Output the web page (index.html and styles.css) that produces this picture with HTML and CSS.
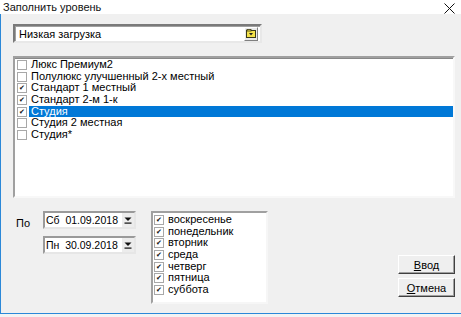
FILE: index.html
```html
<!DOCTYPE html>
<html lang="ru">
<head>
  <meta charset="UTF-8" />
  <title>Заполнить уровень</title>
  <link rel="stylesheet" href="styles.css">
</head>
<body>
  <div class="window">
    <div class="titlebar">
      <span class="title">Заполнить уровень</span>
      <svg class="close" width="11" height="11" viewBox="0 0 11 11">
        <path d="M0.5 0.5 L10.5 10.5 M10.5 0.5 L0.5 10.5" stroke="#111" stroke-width="1" fill="none"/>
      </svg>
    </div>

    <div class="content">
      <div class="combo">
        <div class="combo-text">Низкая загрузка</div>
        <div class="combo-btn">
          <svg width="10" height="9" viewBox="0 0 10 9">
            <rect x="0.5" y="1.5" width="9" height="7" fill="#f4e24a" stroke="#3a3a1a"/>
            <rect x="1" y="0.5" width="4" height="1.5" fill="#f4e24a" stroke="#3a3a1a" stroke-width="0.8"/>
            <path d="M3 4 L7 4 L5 6.5 Z" fill="#222"/>
          </svg>
        </div>
      </div>

      <div class="listbox">
        <div class="row"><span class="chk"></span>Люкс Премиум2</div>
        <div class="row"><span class="chk"></span>Полулюкс улучшенный 2-х местный</div>
        <div class="row"><span class="chk on">✔</span>Стандарт 1 местный</div>
        <div class="row"><span class="chk on">✔</span>Стандарт 2-м 1-к</div>
        <div class="row"><span class="chk on">✔</span><span class="sel">Студия</span></div>
        <div class="row"><span class="chk"></span>Студия 2 местная</div>
        <div class="row"><span class="chk"></span>Студия*</div>
      </div>

      <div class="bottom">
        <div class="label">По</div>
        <div class="dates">
          <div class="datebox">
            <div class="date-text">Сб&nbsp; 01.09.2018</div>
            <div class="date-btn">
              <svg width="8" height="7" viewBox="0 0 8 7">
                <path d="M0.5 0.5 L7.5 0.5 L4 4 Z" fill="#111"/>
                <rect x="0.5" y="5.5" width="7" height="1.2" fill="#111"/>
              </svg>
            </div>
          </div>
          <div class="datebox">
            <div class="date-text">Пн&nbsp; 30.09.2018</div>
            <div class="date-btn">
              <svg width="8" height="7" viewBox="0 0 8 7">
                <path d="M0.5 0.5 L7.5 0.5 L4 4 Z" fill="#111"/>
                <rect x="0.5" y="5.5" width="7" height="1.2" fill="#111"/>
              </svg>
            </div>
          </div>
        </div>

        <div class="days">
          <div class="row"><span class="chk on">✔</span>воскресенье</div>
          <div class="row"><span class="chk on">✔</span>понедельник</div>
          <div class="row"><span class="chk on">✔</span>вторник</div>
          <div class="row"><span class="chk on">✔</span>среда</div>
          <div class="row"><span class="chk on">✔</span>четверг</div>
          <div class="row"><span class="chk on">✔</span>пятница</div>
          <div class="row"><span class="chk on">✔</span>суббота</div>
        </div>

        <div class="actions">
          <button class="btn"><u>В</u>вод</button>
          <button class="btn"><u>О</u>тмена</button>
        </div>
      </div>
    </div>
  </div>
</body>
</html>
```

FILE: styles.css
```css
body {
  margin: 0;
  background: #f3f3f3;
  font-family: "Liberation Sans", Arial, sans-serif;
  font-size: 11px;
  color: #000;
}
.window {
  width: 460px;
  height: 313px;
  background: #f0f0f0;
  border-left: 1px solid #2b88d8;
  border-bottom: 1px solid #2b88d8;
}
.titlebar {
  height: 14px;
  background: #fff;
  display: flex;
  justify-content: space-between;
  align-items: center;
  padding: 0 6px 0 2px;
  margin-left: -1px;
}
.title {
  font-size: 11px;
  color: #111;
  padding-left: 1px;
}
.close {
  margin-top: 2px;
}
.content {
  padding: 10px 0 0 12px;
}

/* combo */
.combo {
  width: 245px;
  height: 15px;
  display: flex;
  align-items: center;
  background: #fff;
  border: 2px solid;
  border-color: #7a7a7a #e8e8e8 #e8e8e8 #7a7a7a;
  box-shadow: inset 1px 1px 0 #a0a0a0;
}
.combo-text {
  flex: 1;
  padding-left: 4px;
}
.combo-btn {
  width: 12px;
  height: 12px;
  margin-right: 2px;
  background: #eaeaea;
  border: 1px solid;
  border-color: #fff #808080 #808080 #fff;
  display: flex;
  align-items: center;
  justify-content: center;
}

/* list */
.listbox {
  margin-top: 13px;
  width: 438px;
  height: 137px;
  padding-top: 1px;
  background: #fff;
  border: 2px solid;
  border-color: #a0a0a0 #f8f8f8 #f8f8f8 #a0a0a0;
  box-shadow: inset 0 1px 0 #888;
}
.row {
  height: 11.7px;
  line-height: 11.7px;
  display: flex;
  align-items: center;
  white-space: nowrap;
}
.listbox .row {
  padding-left: 2px;
}
.chk {
  width: 8px;
  height: 8px;
  margin-right: 4px;
  border: 1px solid #a8a8a8;
  background: #fff;
  font-size: 7px;
  line-height: 8px;
  text-align: center;
  color: #111;
  flex-shrink: 0;
}
.sel {
  flex: 1;
  background: #0078d7;
  color: #fff;
  margin-left: -2px;
  padding-left: 2px;
}

/* bottom part */
.bottom {
  margin-top: 13px;
  display: flex;
  align-items: flex-start;
}
.label {
  width: 27px;
  padding: 6px 0 0 3px;
  flex-shrink: 0;
}
.dates {
  display: flex;
  flex-direction: column;
  gap: 7px;
  flex-shrink: 0;
}
.datebox {
  width: 89px;
  height: 14px;
  display: flex;
  align-items: center;
  background: #fff;
  border: 2px solid;
  border-color: #9a9a9a #e6e6e6 #e6e6e6 #9a9a9a;
}
.date-text {
  flex: 1;
  white-space: nowrap;
  overflow: hidden;
  font-size: 10.5px;
  padding-left: 1px;
}
.date-btn {
  width: 12px;
  height: 14px;
  flex-shrink: 0;
  background: #ececec;
  border-left: 1px solid #fff;
  display: flex;
  align-items: center;
  justify-content: center;
}
.days {
  margin-left: 15px;
  width: 113px;
  height: 88px;
  padding-top: 1px;
  flex-shrink: 0;
  background: #fff;
  border: 2px solid;
  border-color: #a0a0a0 #f6f6f6 #f6f6f6 #a0a0a0;
}
.days .row {
  padding-left: 1px;
}
.actions {
  margin-left: 130px;
  margin-top: 44px;
  display: flex;
  flex-direction: column;
  gap: 4px;
}
.btn {
  width: 57px;
  height: 19px;
  padding: 0;
  font-family: "Liberation Sans", Arial, sans-serif;
  font-size: 11px;
  color: #000;
  background: #efefef;
  border: 1px solid;
  border-color: #fff #404040 #404040 #fff;
  box-shadow: inset -1px -1px 0 #a0a0a0;
}
```
